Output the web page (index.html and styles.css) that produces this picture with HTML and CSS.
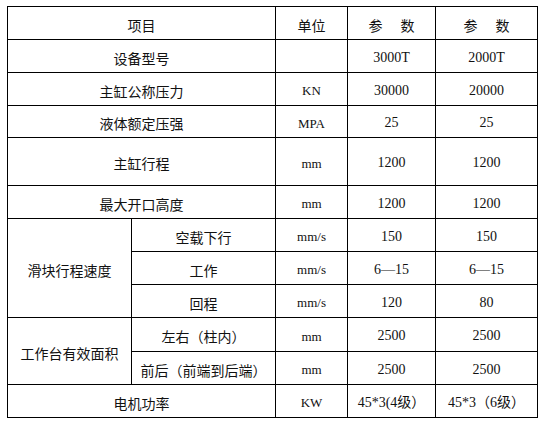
FILE: index.html
```html
<!DOCTYPE html>
<html lang="zh">
<head>
<meta charset="utf-8">
<link rel="stylesheet" href="styles.css">
</head>
<body>
<div class="sheet">
  <div class="cell c2 hd">项目</div>
  <div class="cell hd">单位</div>
  <div class="cell hd">参<span class="sp"></span>数</div>
  <div class="cell hd">参<span class="sp"></span>数</div>

  <div class="cell c2">设备型号</div>
  <div class="cell"></div>
  <div class="cell num">3000T</div>
  <div class="cell num">2000T</div>

  <div class="cell c2">主缸公称压力</div>
  <div class="cell unit">KN</div>
  <div class="cell num">30000</div>
  <div class="cell num">20000</div>

  <div class="cell c2">液体额定压强</div>
  <div class="cell unit">MPA</div>
  <div class="cell num">25</div>
  <div class="cell num">25</div>

  <div class="cell c2">主缸行程</div>
  <div class="cell unit">mm</div>
  <div class="cell num">1200</div>
  <div class="cell num">1200</div>

  <div class="cell c2">最大开口高度</div>
  <div class="cell unit">mm</div>
  <div class="cell num">1200</div>
  <div class="cell num">1200</div>

  <div class="cell r3">滑块行程速度</div>
  <div class="cell">空载下行</div>
  <div class="cell unit">mm/s</div>
  <div class="cell num">150</div>
  <div class="cell num">150</div>

  <div class="cell">工作</div>
  <div class="cell unit">mm/s</div>
  <div class="cell num">6—15</div>
  <div class="cell num">6—15</div>

  <div class="cell">回程</div>
  <div class="cell unit">mm/s</div>
  <div class="cell num">120</div>
  <div class="cell num">80</div>

  <div class="cell r2">工作台有效面积</div>
  <div class="cell">左右（柱内）</div>
  <div class="cell unit">mm</div>
  <div class="cell num">2500</div>
  <div class="cell num">2500</div>

  <div class="cell">前后（前端到后端）</div>
  <div class="cell unit">mm</div>
  <div class="cell num">2500</div>
  <div class="cell num">2500</div>

  <div class="cell c2">电机功率</div>
  <div class="cell unit">KW</div>
  <div class="cell num">45*3(4级）</div>
  <div class="cell num">45*3（6级）</div>
</div>
</body>
</html>
```
FILE: styles.css
```css
html, body {
  margin: 0;
  padding: 0;
  background: #ffffff;
}
body {
  padding: 6px 0 0 7px;
  font-family: "Noto Sans CJK SC", "Noto Sans", sans-serif;
  font-size: 14px;
  color: #111111;
}
.sheet {
  display: inline-grid;
  grid-template-columns: 123px 143px 71px 87px 101px;
  grid-template-rows: 32px 32px 32px 31px 47px 32px 32px 32px 32px 33px 32px 32px;
  gap: 1px;
  padding: 1px;
  background: #000000;
}
.cell {
  background: #ffffff;
  display: flex;
  align-items: center;
  justify-content: center;
  padding-top: 3px;
  box-sizing: border-box;
  line-height: 1;
  white-space: nowrap;
}
.c2 { grid-column: span 2; }
.r3 { grid-row: span 3; }
.r2 { grid-row: span 2; }
.num, .unit {
  font-family: "Liberation Serif", "Noto Sans CJK SC", serif;
  font-size: 14px;
}
.unit { font-size: 13px; }
.sp {
  display: inline-block;
  width: 18px;
}
```
